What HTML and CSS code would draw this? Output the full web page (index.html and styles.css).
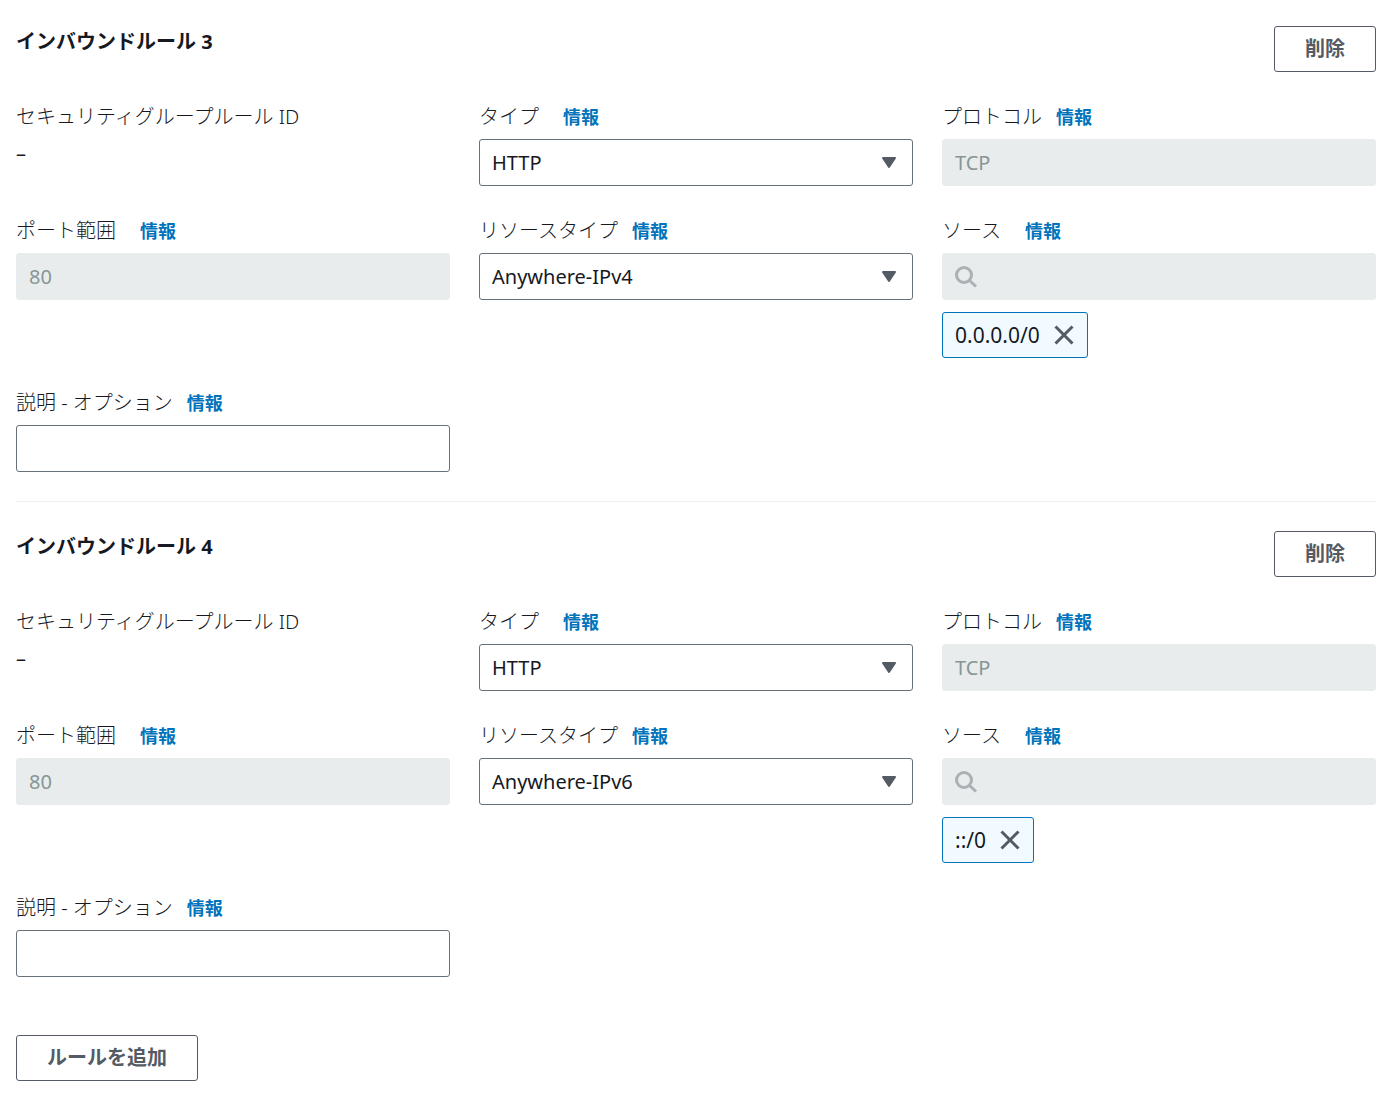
FILE: index.html
```html
<!DOCTYPE html>
<html lang="ja">
<head>
    <meta charset="UTF-8">
    <meta name="viewport" content="width=device-width, initial-scale=1.0">
    <title>インバウンドルールを編集</title>
    <link rel="stylesheet" href="styles.css">
</head>
<body>
    <form class="rules">
        <section class="rule">
            <div class="rule-header">
                <h2>インバウンドルール 3</h2>
                <button type="button" class="btn">削除</button>
            </div>
            <div class="rule-grid">
                <div class="field">
                    <div class="field-label">
                        <span>セキュリティグループルール ID</span>
                    </div>
                    <div class="field-value">–</div>
                </div>
                <div class="field">
                    <div class="field-label wide">
                        <label for="type-3">タイプ</label>
                        <a href="#" class="info">情報</a>
                    </div>
                    <div class="select">
                        <select id="type-3" class="control">
                            <option>HTTP</option>
                            <option>HTTPS</option>
                            <option>SSH</option>
                        </select>
                        <svg class="caret" viewBox="0 0 16 12"><path d="M2 1h12l-6 9z"/></svg>
                    </div>
                </div>
                <div class="field">
                    <div class="field-label">
                        <label for="protocol-3">プロトコル</label>
                        <a href="#" class="info">情報</a>
                    </div>
                    <input id="protocol-3" class="control" type="text" value="TCP" disabled>
                </div>
                <div class="field">
                    <div class="field-label wide">
                        <label for="port-3">ポート範囲</label>
                        <a href="#" class="info">情報</a>
                    </div>
                    <input id="port-3" class="control" type="text" value="80" disabled>
                </div>
                <div class="field">
                    <div class="field-label">
                        <label for="resource-3">リソースタイプ</label>
                        <a href="#" class="info">情報</a>
                    </div>
                    <div class="select">
                        <select id="resource-3" class="control">
                            <option selected>Anywhere-IPv4</option>
                            <option>Anywhere-IPv6</option>
                        </select>
                        <svg class="caret" viewBox="0 0 16 12"><path d="M2 1h12l-6 9z"/></svg>
                    </div>
                </div>
                <div class="field">
                    <div class="field-label wide">
                        <label for="source-3">ソース</label>
                        <a href="#" class="info">情報</a>
                    </div>
                    <div class="search">
                        <svg class="search-icon" viewBox="0 0 24 24"><circle cx="10" cy="10" r="7.5"/><path d="M15.5 15.5l6.5 6"/></svg>
                        <input id="source-3" class="control" type="text" disabled>
                    </div>
                    <div class="token">
                        <span>0.0.0.0/0</span>
                        <button type="button" class="token-remove" aria-label="0.0.0.0/0 を削除">
                            <svg viewBox="0 0 20 20"><path d="M1.5 1.5l17 17M18.5 1.5l-17 17"/></svg>
                        </button>
                    </div>
                </div>
                <div class="field">
                    <div class="field-label">
                        <label for="description-3">説明 - オプション</label>
                        <a href="#" class="info">情報</a>
                    </div>
                    <input id="description-3" class="control" type="text">
                </div>
            </div>
        </section>

        <section class="rule">
            <div class="rule-header">
                <h2>インバウンドルール 4</h2>
                <button type="button" class="btn">削除</button>
            </div>
            <div class="rule-grid">
                <div class="field">
                    <div class="field-label">
                        <span>セキュリティグループルール ID</span>
                    </div>
                    <div class="field-value">–</div>
                </div>
                <div class="field">
                    <div class="field-label wide">
                        <label for="type-4">タイプ</label>
                        <a href="#" class="info">情報</a>
                    </div>
                    <div class="select">
                        <select id="type-4" class="control">
                            <option>HTTP</option>
                            <option>HTTPS</option>
                            <option>SSH</option>
                        </select>
                        <svg class="caret" viewBox="0 0 16 12"><path d="M2 1h12l-6 9z"/></svg>
                    </div>
                </div>
                <div class="field">
                    <div class="field-label">
                        <label for="protocol-4">プロトコル</label>
                        <a href="#" class="info">情報</a>
                    </div>
                    <input id="protocol-4" class="control" type="text" value="TCP" disabled>
                </div>
                <div class="field">
                    <div class="field-label wide">
                        <label for="port-4">ポート範囲</label>
                        <a href="#" class="info">情報</a>
                    </div>
                    <input id="port-4" class="control" type="text" value="80" disabled>
                </div>
                <div class="field">
                    <div class="field-label">
                        <label for="resource-4">リソースタイプ</label>
                        <a href="#" class="info">情報</a>
                    </div>
                    <div class="select">
                        <select id="resource-4" class="control">
                            <option>Anywhere-IPv4</option>
                            <option selected>Anywhere-IPv6</option>
                        </select>
                        <svg class="caret" viewBox="0 0 16 12"><path d="M2 1h12l-6 9z"/></svg>
                    </div>
                </div>
                <div class="field">
                    <div class="field-label wide">
                        <label for="source-4">ソース</label>
                        <a href="#" class="info">情報</a>
                    </div>
                    <div class="search">
                        <svg class="search-icon" viewBox="0 0 24 24"><circle cx="10" cy="10" r="7.5"/><path d="M15.5 15.5l6.5 6"/></svg>
                        <input id="source-4" class="control" type="text" disabled>
                    </div>
                    <div class="token">
                        <span>::/0</span>
                        <button type="button" class="token-remove" aria-label="::/0 を削除">
                            <svg viewBox="0 0 20 20"><path d="M1.5 1.5l17 17M18.5 1.5l-17 17"/></svg>
                        </button>
                    </div>
                </div>
                <div class="field">
                    <div class="field-label">
                        <label for="description-4">説明 - オプション</label>
                        <a href="#" class="info">情報</a>
                    </div>
                    <input id="description-4" class="control" type="text">
                </div>
            </div>
        </section>

        <button type="button" class="btn btn-add">ルールを追加</button>
    </form>
</body>
</html>
```
FILE: styles.css
```css
* {
    box-sizing: border-box;
}
body {
    margin: 0;
    background-color: #fff;
    color: #16191f;
    font-family: "Noto Sans", "Noto Sans CJK JP", sans-serif;
    font-size: 20px;
    line-height: 30px;
}
button, input, select {
    font-family: inherit;
    font-size: inherit;
}
.rules {
    padding: 26px 24px 26px 16px;
}
.rule + .rule {
    margin-top: 29px;
    padding-top: 29px;
    border-top: 1px solid #eff1f1;
}
.rule-header {
    display: flex;
    justify-content: space-between;
    align-items: flex-start;
    margin-bottom: 30px;
}
h2 {
    margin: 0;
    font-size: 20px;
    font-weight: 700;
    line-height: 32px;
}
.btn {
    height: 46px;
    padding: 0 30px;
    border: 1px solid #545b64;
    border-radius: 3px;
    background-color: #fff;
    color: #545b64;
    font-weight: 700;
    line-height: 30px;
    cursor: pointer;
}
.btn-add {
    margin-top: 58px;
}
.rule-grid {
    display: grid;
    grid-template-columns: repeat(3, 1fr);
    gap: 30px 29px;
}
.field {
    min-width: 0;
}
.field-label {
    display: flex;
    align-items: baseline;
    gap: 14px;
    height: 30px;
    margin-bottom: 7px;
    font-weight: 300;
}
.field-label.wide {
    gap: 24px;
}
.info {
    color: #0073bb;
    font-size: 18px;
    font-weight: 700;
    text-decoration: none;
}
.control {
    display: block;
    width: 100%;
    height: 47px;
    margin: 0;
    padding: 0 12px;
    border: 1px solid #687078;
    border-radius: 3px;
    background-color: #fff;
    color: #16191f;
}
.control:disabled {
    border-color: #e9ecec;
    background-color: #e9ecec;
    color: #879596;
}
.select, .search {
    position: relative;
}
.select .control {
    appearance: none;
}
.caret {
    position: absolute;
    top: 18px;
    right: 16px;
    width: 16px;
    height: 12px;
    fill: #545b64;
    stroke: #545b64;
    stroke-width: 2;
    stroke-linejoin: round;
    pointer-events: none;
}
.search .control {
    padding-left: 44px;
}
.search-icon {
    position: absolute;
    top: 12px;
    left: 12px;
    width: 24px;
    height: 24px;
    fill: none;
    stroke: #aab1b5;
    stroke-width: 3;
}
.token {
    display: inline-flex;
    align-items: center;
    gap: 14px;
    height: 46px;
    margin-top: 12px;
    padding: 0 13px 0 12px;
    border: 1px solid #0073bb;
    border-radius: 3px;
    background-color: #f1faff;
    font-size: 21px;
    vertical-align: top;
}
.token-remove {
    display: flex;
    padding: 0;
    border: 0;
    background: none;
    cursor: pointer;
}
.token-remove svg {
    width: 20px;
    height: 20px;
    fill: none;
    stroke: #545b64;
    stroke-width: 3;
}
```
